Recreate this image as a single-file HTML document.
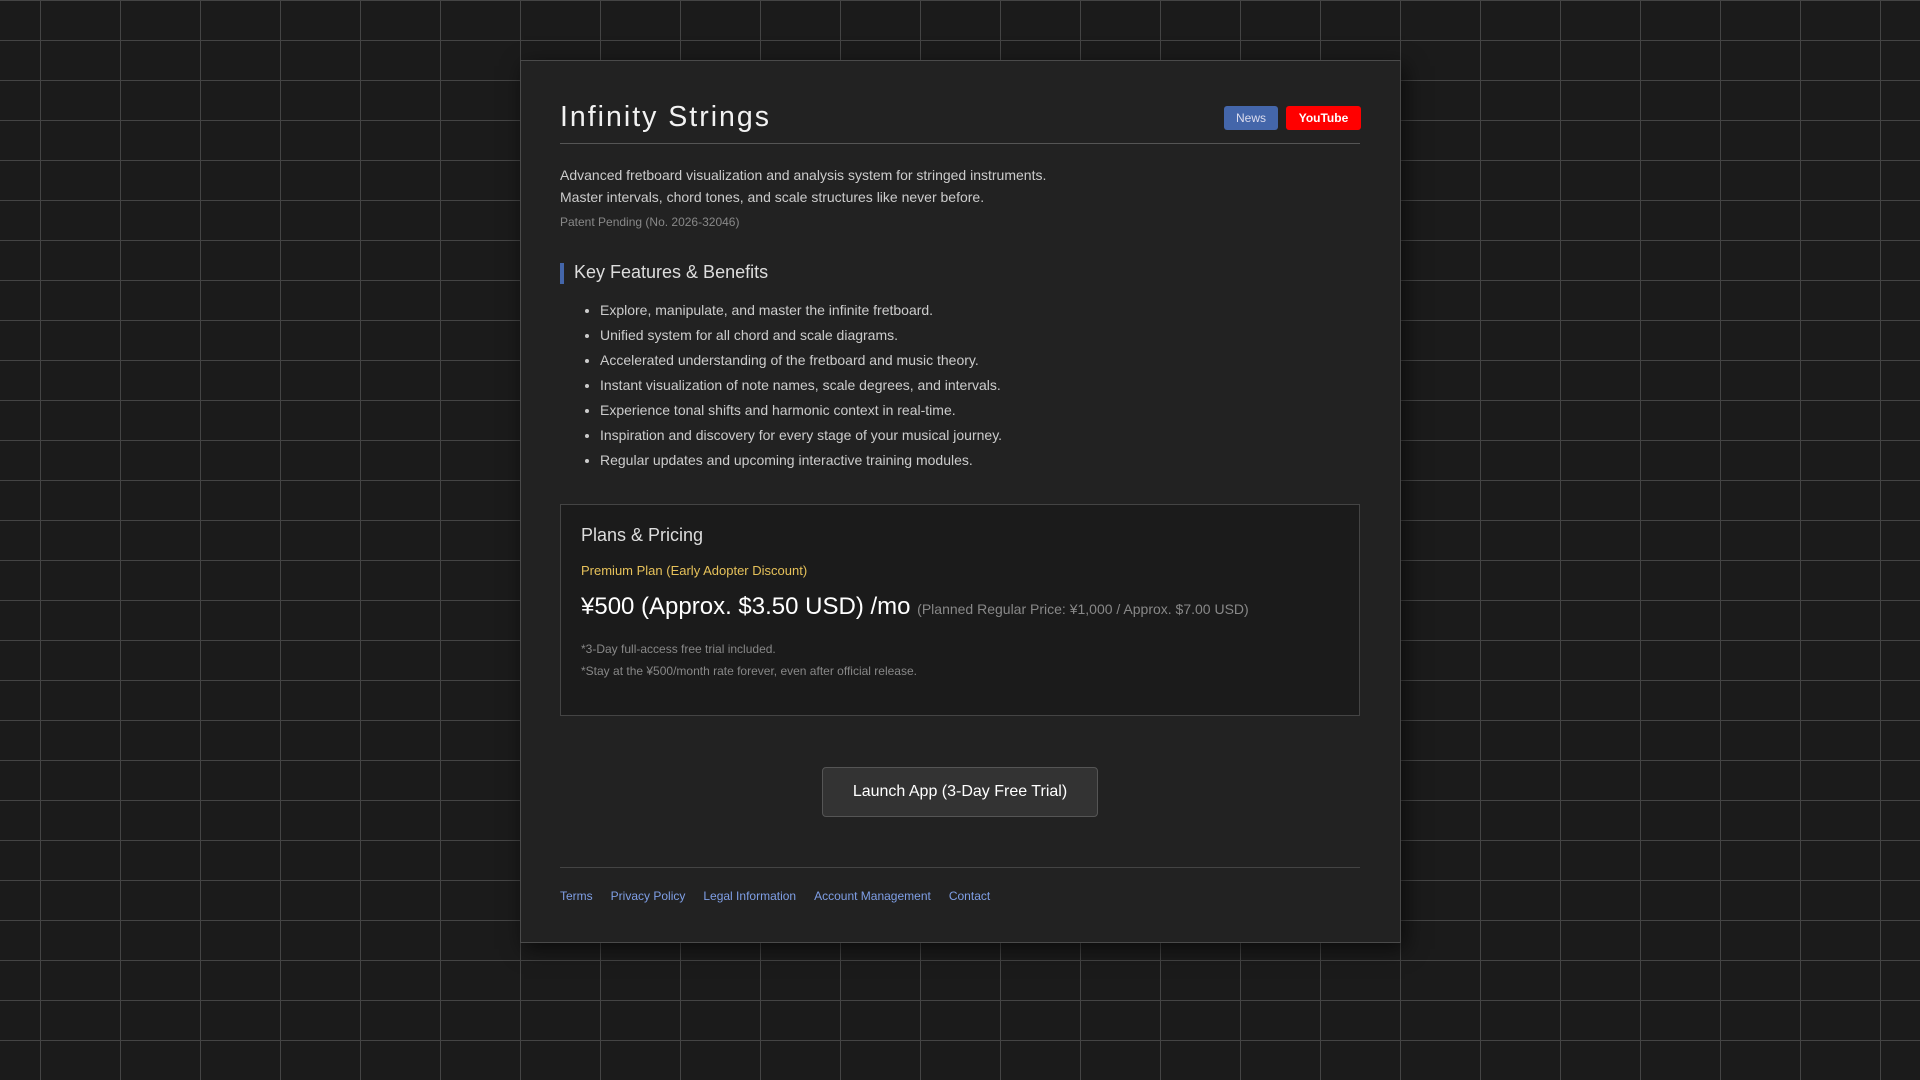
<!DOCTYPE html>
<html><head><meta charset="utf-8"><style>
*{margin:0;padding:0;box-sizing:border-box}
body{width:1920px;height:1080px;overflow:hidden;background-color:#1b1b1b;
background-image:linear-gradient(#444 1px,transparent 1px),linear-gradient(90deg,#444 1px,transparent 1px);
background-size:80px 40px;background-position:40px 0;font-family:"Liberation Sans",sans-serif;position:relative}
.card{position:absolute;left:520px;top:60px;width:881px;height:883px;background:#222;border:1px solid #4a4a4a;box-shadow:4px 6px 20px rgba(0,0,0,.6)}
.a{position:absolute;white-space:nowrap}
h1{position:absolute;left:39px;font-weight:normal;font-size:28.5px;letter-spacing:2px;color:#f2f2f2;line-height:1;top:42px}
.hr{position:absolute;left:39px;width:800px;height:1px;background:#555}
.btn{position:absolute;top:45px;height:24px;border-radius:3px;font-size:12px;color:#fff;text-align:center;line-height:24px}
.desc{left:39px;font-size:14px;color:#ccc;line-height:22px}
ul{position:absolute;left:79px;top:237px;font-size:14px;color:#ccc;line-height:25px}
.links a{color:#7f9fe6;text-decoration:none;margin-right:18px;font-size:12px}
</style></head><body>
<div class="card">
<h1>Infinity Strings</h1>
<div class="btn" style="left:703px;width:54px;background:#4466aa;color:#dde">News</div>
<div class="btn" style="left:765px;width:75px;background:#ff0000;font-weight:bold">YouTube</div>
<div class="hr" style="top:82px"></div>
<div class="a desc" style="top:103px">Advanced fretboard visualization and analysis system for stringed instruments.<br>Master intervals, chord tones, and scale structures like never before.</div>
<div class="a" style="left:39px;top:154px;font-size:12px;color:#888">Patent Pending (No. 2026-32046)</div>
<div class="a" style="left:39px;top:202px;width:4px;height:21px;background:#4466aa"></div>
<div class="a" style="left:53px;top:201px;font-size:18px;color:#ddd">Key Features &amp; Benefits</div>
<ul>
<li>Explore, manipulate, and master the infinite fretboard.</li>
<li>Unified system for all chord and scale diagrams.</li>
<li>Accelerated understanding of the fretboard and music theory.</li>
<li>Instant visualization of note names, scale degrees, and intervals.</li>
<li>Experience tonal shifts and harmonic context in real-time.</li>
<li>Inspiration and discovery for every stage of your musical journey.</li>
<li>Regular updates and upcoming interactive training modules.</li>
</ul>
<div class="a" style="left:39px;top:443px;width:800px;height:212px;background:#1b1b1b;border:1px solid #444"></div>
<div class="a" style="left:60px;top:464px;font-size:18px;color:#ddd">Plans &amp; Pricing</div>
<div class="a" style="left:60px;top:502px;font-size:13px;color:#e6c15a">Premium Plan (Early Adopter Discount)</div>
<div class="a" style="left:60px;top:532px;font-size:24px;color:#fff">¥500 (Approx. $3.50 USD) /mo <span style="font-size:14px;color:#888">(Planned Regular Price: ¥1,000 / Approx. $7.00 USD)</span></div>
<div class="a" style="left:60px;top:577px;font-size:12px;color:#888;line-height:22px">*3-Day full-access free trial included.<br>*Stay at the ¥500/month rate forever, even after official release.</div>
<div class="a" style="left:301px;top:706px;width:276px;height:50px;background:#333;border:1px solid #555;border-radius:4px;color:#fff;font-size:16px;text-align:center;line-height:48px">Launch App (3-Day Free Trial)</div>
<div class="hr" style="top:806px;background:#444"></div>
<div class="a links" style="left:39px;top:826px"><a>Terms</a><a>Privacy Policy</a><a>Legal Information</a><a>Account Management</a><a>Contact</a></div>
</div>
</body></html>
